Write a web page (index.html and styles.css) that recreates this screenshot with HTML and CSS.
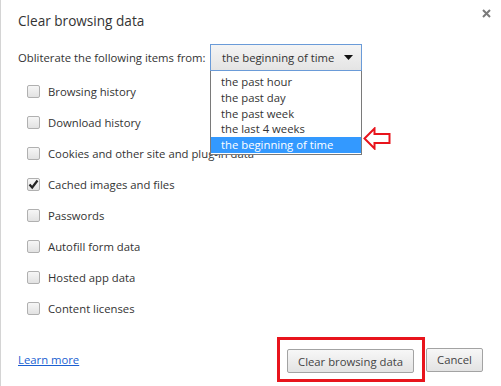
FILE: index.html
```html
<!DOCTYPE html>
<html>
<head>
<meta charset="utf-8">
<link rel="stylesheet" href="styles.css">
</head>
<body>
<div class="dialog">
  <div class="close" aria-label="close">
    <svg width="9" height="9" viewBox="0 0 9 9"><path d="M1 1L8 8M8 1L1 8" stroke="#7a7a7a" stroke-width="2"/></svg>
  </div>
  <h1 class="title">Clear browsing data</h1>
  <div class="range-row">
    <span class="range-label">Obliterate the following items from:</span>
    <div class="select-wrap">
      <div class="select">
        <span>the beginning of time</span>
        <svg class="caret" width="9" height="5" viewBox="0 0 9 5"><path d="M0 0H9L4.5 5Z" fill="#111"/></svg>
      </div>
      <ul class="options">
        <li>the past hour</li>
        <li>the past day</li>
        <li>the past week</li>
        <li>the last 4 weeks</li>
        <li class="selected">the beginning of time</li>
      </ul>
      <svg class="arrow" width="28" height="23" viewBox="0 0 28 23"><path d="M1.5 11.5L11.5 1.5V7H26.5V16H11.5V21.5Z" fill="none" stroke="#e8141c" stroke-width="2" stroke-linejoin="miter"/></svg>
    </div>
  </div>
  <ul class="checks">
    <li><span class="box"></span>Browsing history</li>
    <li><span class="box"></span>Download history</li>
    <li><span class="box"></span>Cookies and other site and plug-in data</li>
    <li><span class="box checked"><svg width="11" height="11" viewBox="0 0 11 11"><path d="M1.5 5.5L4.2 8.5L9.5 1.5" fill="none" stroke="#222" stroke-width="2.2"/></svg></span>Cached images and files</li>
    <li><span class="box"></span>Passwords</li>
    <li><span class="box"></span>Autofill form data</li>
    <li><span class="box"></span>Hosted app data</li>
    <li><span class="box"></span>Content licenses</li>
  </ul>
  <div class="footer">
    <a class="learn" href="#">Learn more</a>
    <div class="buttons">
      <div class="highlight"><button class="btn">Clear browsing data</button></div>
      <button class="btn">Cancel</button>
    </div>
  </div>
</div>
</body>
</html>
```
FILE: styles.css
```css
* { box-sizing: border-box; }
html, body { margin: 0; padding: 0; background: #fff; }
body {
  font-family: "Open Sans", "Noto Sans", sans-serif;
  font-size: 11.3px;
  color: #333;
  white-space: nowrap;
}
.dialog {
  position: relative;
  width: 501px;
  height: 386px;
  border-left: 1px solid #d4d4d4;
  padding: 0 0 0 17px;
  display: flex;
  flex-direction: column;
}
.close {
  position: absolute;
  top: 9px;
  right: 10px;
  width: 9px;
  height: 9px;
  line-height: 0;
}
.title {
  margin: 0;
  padding-top: 11px;
  font-size: 13.6px;
  font-weight: normal;
  line-height: 20px;
  color: #333;
}
.range-row {
  margin-top: 13px;
  display: flex;
  align-items: center;
  height: 27px;
}
.range-label { width: 192px; flex: none; }
.select-wrap { position: relative; }
.select {
  width: 152px;
  height: 27px;
  border: 1px solid #6a9bd8;
  background: linear-gradient(#f4f4f4, #e4e4e4);
  display: flex;
  align-items: center;
  justify-content: space-between;
  padding: 0 8px 0 11px;
  color: #333;
}
.caret { display: block; }
.options {
  position: absolute;
  left: 0;
  top: 27px;
  width: 152px;
  margin: 0;
  padding: 3px 0 1px;
  list-style: none;
  background: #fff;
  border: 1px solid #7a7a7a;
  border-top: none;
}
.options li {
  height: 15.8px;
  line-height: 15.8px;
  padding-left: 10px;
  color: #333;
}
.options li.selected {
  background: #3399ff;
  color: #fff;
}
.arrow {
  position: absolute;
  left: 153px;
  top: 83px;
}
.checks {
  list-style: none;
  margin: 5px 0 0;
  padding: 0 0 0 9px;
}
.checks li {
  height: 31px;
  display: flex;
  align-items: center;
}
.box {
  width: 13px;
  height: 13px;
  border: 1px solid #b0b0b0;
  border-radius: 2px;
  background: linear-gradient(#f6f6f6, #e2e2e2);
  margin-right: 8px;
  display: flex;
  align-items: center;
  justify-content: center;
  flex: none;
}
.box svg { display: block; }
.footer {
  margin-top: auto;
  margin-bottom: 4px;
  display: flex;
  align-items: center;
  justify-content: space-between;
  padding-right: 18px;
}
.learn {
  color: #1a5fd1;
  text-decoration: underline;
}
.buttons {
  display: flex;
  align-items: center;
}
.highlight {
  border: 3px solid #e8141c;
  padding: 9px 8px 6px 7px;
  margin-right: 1px;
}
.btn {
  font-family: inherit;
  font-size: 11.3px;
  color: #444;
  height: 24px;
  border: 1px solid #a3a3a3;
  border-radius: 2px;
  background: linear-gradient(#f7f7f7, #e3e3e3);
  padding: 0;
  white-space: nowrap;
}
.highlight .btn { width: 127px; }
.buttons > .btn { width: 57px; }
```
